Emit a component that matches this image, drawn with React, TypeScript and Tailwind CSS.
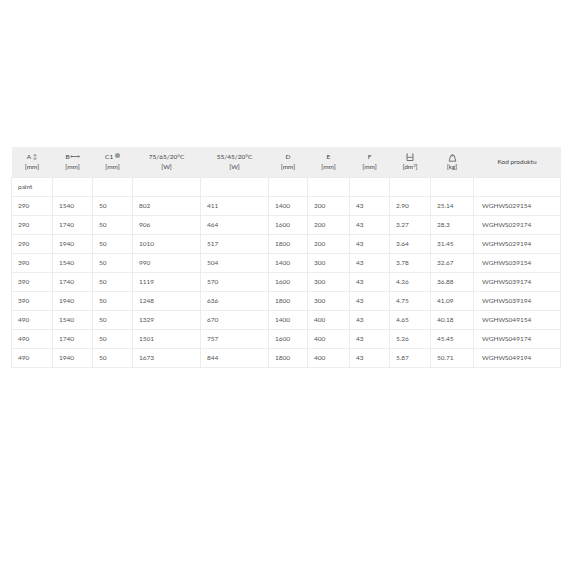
const cols = [41, 40, 40, 68, 68, 39, 42, 40, 41, 43, 87];

const rows = [
  ['290', '1540', '50', '802', '411', '1400', '200', '43', '2.90', '25.14', 'WGHWS029154'],
  ['290', '1740', '50', '906', '464', '1600', '200', '43', '3.27', '28.3', 'WGHWS029174'],
  ['290', '1940', '50', '1010', '517', '1800', '200', '43', '3.64', '31.45', 'WGHWS029194'],
  ['390', '1540', '50', '990', '504', '1400', '300', '43', '3.78', '32.67', 'WGHWS039154'],
  ['390', '1740', '50', '1119', '570', '1600', '300', '43', '4.26', '36.88', 'WGHWS039174'],
  ['390', '1940', '50', '1248', '636', '1800', '300', '43', '4.75', '41.09', 'WGHWS039194'],
  ['490', '1540', '50', '1329', '670', '1400', '400', '43', '4.65', '40.18', 'WGHWS049154'],
  ['490', '1740', '50', '1501', '757', '1600', '400', '43', '5.26', '45.45', 'WGHWS049174'],
  ['490', '1940', '50', '1673', '844', '1800', '400', '43', '5.87', '50.71', 'WGHWS049194'],
];

function VolumeIcon() {
  return (
    <svg width="8" height="9" viewBox="0 0 8 9" className="inline-block" fill="none" stroke="#666" strokeWidth="0.9">
      <path d="M1 1v6.5h6V1" />
      <path d="M1 4.3h6" />
      <path d="M1 1h1M6 1h1" />
    </svg>
  );
}

function WeightIcon() {
  return (
    <svg width="9" height="9" viewBox="0 0 9 9" className="inline-block" fill="none" stroke="#666" strokeWidth="0.9">
      <path d="M3.5 2.6a1 1 0 1 1 2 0" />
      <path d="M2.6 2.8h3.8L7.8 8.2H1.2z" />
    </svg>
  );
}

function Head({ top, bottom }: { top: React.ReactNode; bottom?: React.ReactNode }) {
  return (
    <th className="font-normal text-center align-middle text-[6.5px] leading-[10px] text-[#444]">
      <div>{top}</div>
      {bottom && <div>{bottom}</div>}
    </th>
  );
}

export default function App() {
  return (
    <div className="w-[576px] h-[576px] bg-white pt-[147px] pl-[11px]" style={{ fontFamily: 'Lato, "Open Sans", sans-serif' }}>
      <table className="border-collapse table-fixed w-[549px]">
        <colgroup>
          {cols.map((w, i) => (
            <col key={i} style={{ width: w }} />
          ))}
        </colgroup>
        <thead>
          <tr className="h-[30px] bg-[#efefef]">
            <Head top={<>A <span className="text-[#777]">↕</span></>} bottom="[mm]" />
            <Head top={<>B<span className="text-[#777]">⟷</span></>} bottom="[mm]" />
            <Head
              top={
                <>
                  C1{' '}
                  <span className="relative -top-[2px] inline-block w-[5px] h-[5px] rounded-full bg-[#999] align-middle" />
                </>
              }
              bottom="[mm]"
            />
            <Head top="75/65/20°C" bottom="[W]" />
            <Head top="55/45/20°C" bottom="[W]" />
            <Head top="D" bottom="[mm]" />
            <Head top="E" bottom="[mm]" />
            <Head top="F" bottom="[mm]" />
            <Head top={<VolumeIcon />} bottom={<>[dm<sup className="text-[4px]">3</sup>]</>} />
            <Head top={<WeightIcon />} bottom="[kg]" />
            <Head top="Kod produktu" />
          </tr>
        </thead>
        <tbody className="text-[6.5px] text-[#555]">
          <tr className="h-[19px]">
            <td className="border border-[#ececec] pl-[6px]">paint</td>
            {cols.slice(1).map((_, i) => (
              <td key={i} className="border border-[#ececec]" />
            ))}
          </tr>
          {rows.map((r, i) => (
            <tr key={i} className="h-[19px]">
              {r.map((c, j) => (
                <td key={j} className={`border border-[#ececec] ${j === 10 ? 'pl-[8px]' : 'pl-[6px]'}`}>
                  {c}
                </td>
              ))}
            </tr>
          ))}
        </tbody>
      </table>
    </div>
  );
}
